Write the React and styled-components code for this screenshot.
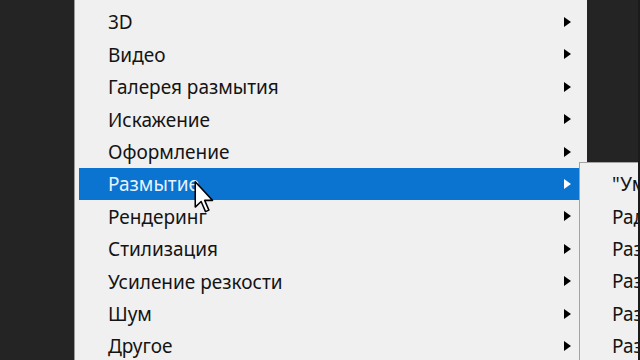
import React from "react";
import styled, { createGlobalStyle } from "styled-components";

const GlobalStyle = createGlobalStyle`
  html, body {
    margin: 0;
    padding: 0;
    background: #232323;
    overflow: hidden;
  }
  body {
    font-family: "Noto Sans", "Open Sans", "DejaVu Sans", sans-serif;
  }
`;

const filters = [
  "3D",
  "Видео",
  "Галерея размытия",
  "Искажение",
  "Оформление",
  "Размытие",
  "Рендеринг",
  "Стилизация",
  "Усиление резкости",
  "Шум",
  "Другое",
];

const blurItems = [
  "\"Умное\" размытие",
  "Радиальное размытие",
  "Размытие",
  "Размытие +",
  "Размытие в движении",
  "Размытие по Гауссу",
];

const App = () => {
  return (
    <>
      <GlobalStyle />
      <Screen>
        <Backdrop />
        <Menu>
          {filters.map((name) => (
            <Item key={name} active={name === "Размытие"}>
              <Label>{name}</Label>
              <Arrow active={name === "Размытие"} />
            </Item>
          ))}
        </Menu>
        <Backdrop grow />
        <SubMenu>
          {blurItems.map((name) => (
            <SubItem key={name}>{name}</SubItem>
          ))}
        </SubMenu>
        <Cursor width="21" height="32" viewBox="0 0 12 19">
          <path
            d="M0.5 0.5 L0.5 15.5 L4 12.2 L6.6 18.2 L8.6 17.3 L6.1 11.5 L10.8 11.5 Z"
            fill="#ffffff"
            stroke="#000000"
            strokeWidth="0.9"
            strokeLinejoin="round"
          />
        </Cursor>
      </Screen>
    </>
  );
};

export default App;

const Screen = styled.div`
  position: relative;
  width: 640px;
  height: 360px;
  display: flex;
  overflow: hidden;
  background: #232323;
  border-right: 2px solid #1b1b1b;
  box-sizing: border-box;
`;

const Backdrop = styled.div`
  flex: ${(p) => (p.grow ? "1" : "0 0 74px")};
  background: #242424;
`;

const Menu = styled.div`
  flex: 0 0 513px;
  background: #f0f0f0;
  border-left: 1px solid #9a9a9a;
  box-sizing: border-box;
  padding: 5.8px 3px 0 4px;
  display: flex;
  flex-direction: column;
`;

const Item = styled.div`
  height: 32.4px;
  flex: 0 0 32.4px;
  display: flex;
  align-items: center;
  justify-content: space-between;
  padding: 0 13px 0 29px;
  box-sizing: border-box;
  background: ${(p) => (p.active ? "#0a74d0" : "transparent")};
  color: ${(p) => (p.active ? "#e6f2ff" : "#141414")};
`;

const Label = styled.span`
  font-size: 19px;
  line-height: 1;
  padding-top: 2px;
  white-space: nowrap;
`;

const Arrow = styled.span`
  width: 0;
  height: 0;
  border-top: 5px solid transparent;
  border-bottom: 5px solid transparent;
  border-left: 7px solid ${(p) => (p.active ? "#ffffff" : "#000000")};
`;

const SubMenu = styled.div`
  position: absolute;
  left: 579px;
  top: 162px;
  width: 240px;
  height: 220px;
  background: #f0f0f0;
  border-left: 1px solid #a3a3a3;
  border-top: 1px solid #a3a3a3;
  box-sizing: border-box;
  padding: 4px 0 0 32px;
  display: flex;
  flex-direction: column;
`;

const SubItem = styled.div`
  height: 32.4px;
  flex: 0 0 32.4px;
  display: flex;
  align-items: center;
  font-size: 19px;
  color: #141414;
  white-space: nowrap;
  padding-top: 2px;
  box-sizing: border-box;
`;

const Cursor = styled.svg`
  position: absolute;
  left: 194px;
  top: 181px;
`;
